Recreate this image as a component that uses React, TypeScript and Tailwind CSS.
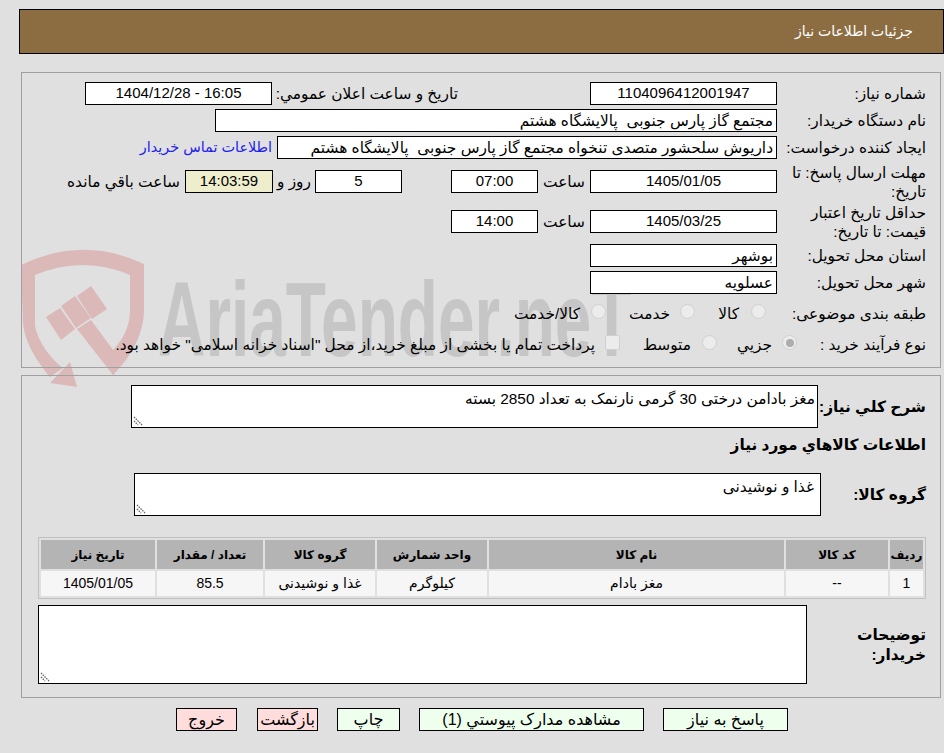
const fieldCls = "flex items-center border border-black bg-white h-[23px] px-[3px] whitespace-pre";

function Field({ w, center, children }: { w: string; center?: boolean; children: React.ReactNode }) {
  return <div className={`${fieldCls} ${w} ${center ? "justify-center text-[15px]" : ""}`}>{children}</div>;
}

function Label({ children }: { children: React.ReactNode }) {
  return <div className="w-[149px] shrink-0 leading-[19px]">{children}</div>;
}

function Radio({ checked }: { checked?: boolean }) {
  return (
    <span className="flex items-center justify-center w-[15px] h-[15px] mb-[4px] rounded-full border border-[#d0d0d0] bg-[#ececec] shrink-0">
      {checked && <span className="w-[8px] h-[8px] rounded-full bg-[#adadad]" />}
    </span>
  );
}

function Grip() {
  return (
    <svg className="absolute left-[1px] bottom-[1px]" width="10" height="10" viewBox="0 0 10 10" fill="none" stroke="#666" strokeWidth="1.3">
      <path d="M1 1 L9 9" strokeDasharray="1.5 1" />
      <path d="M1 5 L5 9" strokeDasharray="1.5 1" />
    </svg>
  );
}

function Watermark() {
  return (
    <div aria-hidden className="absolute left-0 top-0 w-[944px] h-[400px] overflow-hidden pointer-events-none">
      <svg className="absolute left-0 top-0" width="160" height="400" viewBox="0 0 160 400" fill="#dcb9b9">
        <path d="M21 265 Q83 235 144 264 V310 C144 335 130 358 113 375 L103 360 C120 345 130 330 130 310 V275 Q83 255 35 275 V325 C37 340 50 358 63 368 L50 377 C40 365 25 345 23 323 Z" />
        <polygon points="70,362 77,387 50,383" />
        <polygon points="46,317 60,308 75,329 61,340" />
        <polygon points="61,306 75,296 91,318 76,328" />
        <polygon points="77,296 91,286 107,309 92,319" />
        <polygon points="77,329 91,320 122,362 113,375" />
      </svg>
      <div className="absolute left-[158px] top-[266px] text-[106px] leading-[106px] font-bold text-[#c6c6c6] whitespace-nowrap origin-left [transform:scaleX(0.62)] [font-family:'Liberation_Sans',sans-serif]">
        AriaTender.neT
      </div>
    </div>
  );
}

const headers = ["ردیف", "کد کالا", "نام کالا", "واحد شمارش", "گروه کالا", "تعداد / مقدار", "تاریخ نیاز"];
const cells = ["1", "--", "مغز بادام", "کیلوگرم", "غذا و نوشیدنی", "85.5", "1405/01/05"];

export default function App() {
  return (
    <div
      dir="rtl"
      className="relative w-[944px] h-[753px] overflow-hidden bg-[#e0e0e0] text-[15.4px] text-black [font-family:'Liberation_Sans','DejaVu_Sans',sans-serif]"
    >
      <Watermark />
      <div className="relative flex flex-col">
        <div className="flex items-center h-[45px] mt-[9px] w-[925px] self-start border border-black bg-[#8c6d42] text-white text-[14px] pr-[30px]">
          جزئیات اطلاعات نیاز
        </div>

        <div className="mt-[18px] mr-[3px] w-[920px] h-[296px] self-start border border-[#a0a0a0] pr-[14px] pt-[9px]">
          <div className="flex items-center h-[23px]">
            <Label>شماره نیاز:</Label>
            <Field w="w-[187px]" center>1104096412001947</Field>
            <div className="w-[132px]" />
            <div className="w-[186px] whitespace-nowrap">تاریخ و ساعت اعلان عمومي:</div>
            <Field w="w-[187px]" center><span dir="ltr">1404/12/28 - 16:05</span></Field>
          </div>
          <div className="flex items-center h-[23px] mt-[4px]">
            <Label>نام دستگاه خریدار:</Label>
            <Field w="w-[562px]">مجتمع گاز پارس جنوبی  پالایشگاه هشتم</Field>
          </div>
          <div className="flex items-center h-[23px] mt-[4px]">
            <Label>ایجاد کننده درخواست:</Label>
            <Field w="w-[500px]">داریوش سلحشور متصدی تنخواه مجتمع گاز پارس جنوبی  پالایشگاه هشتم</Field>
            <a className="mr-[5px] text-[14.4px] text-[#2222ee] whitespace-nowrap">اطلاعات تماس خریدار</a>
          </div>
          <div className="flex items-center h-[23px] mt-[11px]">
            <Label>مهلت ارسال پاسخ: تا تاریخ:</Label>
            <Field w="w-[187px]" center>1405/01/05</Field>
            <div className="w-[52px] text-center">ساعت</div>
            <Field w="w-[87px]" center>07:00</Field>
            <div className="w-[49px]" />
            <Field w="w-[87px]" center>5</Field>
            <div className="w-[42px] text-center">روز و</div>
            <Field w="w-[88px] !bg-[#eeeecc]" center>14:03:59</Field>
            <div className="mr-[5px] whitespace-nowrap">ساعت باقي مانده</div>
          </div>
          <div className="flex items-center h-[23px] mt-[17px]">
            <Label>حداقل تاریخ اعتبار قیمت: تا تاریخ:</Label>
            <Field w="w-[187px]" center>1405/03/25</Field>
            <div className="w-[52px] text-center">ساعت</div>
            <Field w="w-[87px]" center>14:00</Field>
          </div>
          <div className="flex items-center h-[23px] mt-[11px]">
            <Label>استان محل تحویل:</Label>
            <Field w="w-[187px]">بوشهر</Field>
          </div>
          <div className="flex items-center h-[23px] mt-[4px]">
            <Label>شهر محل تحویل:</Label>
            <Field w="w-[187px]">عسلویه</Field>
          </div>
          <div className="flex items-center h-[23px] mt-[8px]">
            <Label>طبقه بندی موضوعی:</Label>
            <div className="w-[11px]" />
            <Radio />
            <div className="w-[56px] pr-[12px]">کالا</div>
            <Radio />
            <div className="w-[74px] pr-[10px]">خدمت</div>
            <Radio />
            <div className="pr-[11px]">کالا/خدمت</div>
          </div>
          <div className="flex items-center h-[23px] mt-[8px]">
            <div className="w-[129px] shrink-0">نوع فرآیند خرید :</div>
            <Radio checked />
            <div className="w-[65px] pr-[10px]">جزيي</div>
            <Radio />
            <div className="w-[82px] pr-[11px]">متوسط</div>
            <span className="w-[15px] h-[15px] mb-[4px] rounded-[2px] border border-[#d0d0d0] bg-[#ececec] shrink-0" />
            <div className="pr-[10px] whitespace-nowrap">پرداخت تمام یا بخشی از مبلغ خرید،از محل "اسناد خزانه اسلامی" خواهد بود.</div>
          </div>
        </div>

        <div className="mt-[7px] mr-[3px] w-[920px] h-[323px] self-start border border-[#a0a0a0] pr-[14px] pt-[9px]">
          <div className="flex items-center h-[43px]">
            <div className="w-[108px] shrink-0 font-bold whitespace-nowrap">شرح کلي نیاز:</div>
            <div className="relative w-[687px] h-[43px] border border-black bg-white px-[2px] pt-[1px]">
              مغز بادامن درختی 30 گرمی نارنمک به تعداد 2850 بسته
              <Grip />
            </div>
          </div>
          <div className="font-bold h-[20px] mt-[5px]">اطلاعات کالاهاي مورد نياز</div>
          <div className="flex items-center h-[43px] mt-[20px]">
            <div className="w-[105px] shrink-0 font-bold">گروه کالا:</div>
            <div className="relative w-[687px] h-[43px] border border-black bg-white px-[6px] pt-[1px]">
              غذا و نوشیدنی
              <Grip />
            </div>
          </div>
          <div className="w-[888px] mt-[21px] border border-[#c0c0c0] p-[2px] grid grid-cols-[33px_102px_295px_110px_110px_106px_114px] grid-rows-[29px_25px] gap-[2px] text-[14px]">
            {headers.map((h) => (
              <div key={h} className="flex items-center justify-center bg-[#b4b4b4] font-bold text-[12px] whitespace-nowrap">{h}</div>
            ))}
            {cells.map((c) => (
              <div key={c} className="flex items-center justify-center bg-[#f6f6f6] whitespace-nowrap">{c}</div>
            ))}
          </div>
          <div className="flex items-center h-[79px] mt-[6px]">
            <div className="w-[119px] shrink-0 font-bold leading-[20px]">توضیحات خریدار:</div>
            <div className="relative w-[769px] h-[79px] border border-black bg-white">
              <Grip />
            </div>
          </div>
        </div>

        <div className="flex mt-[10px] pr-[156px] h-[23px] text-[16px]">
          <div className="flex items-center justify-center w-[125px] border border-black bg-[#eeffee]">پاسخ به نیاز</div>
          <div className="flex items-center justify-center w-[225px] mr-[19px] border border-black bg-[#eeffee]">مشاهده مدارک پیوستي (1)</div>
          <div className="flex items-center justify-center w-[63px] mr-[19px] border border-black bg-[#eeffee]">چاپ</div>
          <div className="flex items-center justify-center w-[61px] mr-[19px] border border-black bg-[#ffdddd]">بازگشت</div>
          <div className="flex items-center justify-center w-[61px] mr-[20px] border border-black bg-[#ffdddd]">خروج</div>
        </div>
      </div>
    </div>
  );
}
